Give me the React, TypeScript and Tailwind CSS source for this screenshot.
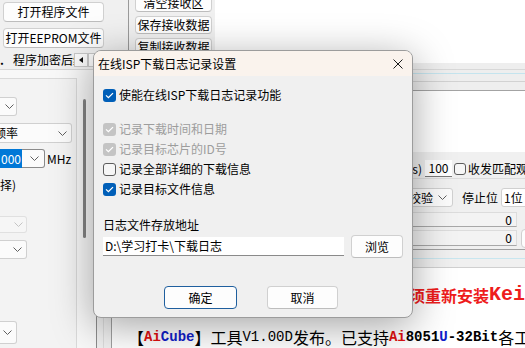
import React from "react";

const Chevron = ({ color = "#606060" }: { color?: string }) => (
    <svg width="9" height="5" viewBox="0 0 9 5" className="shrink-0">
        <path d="M0.5 0.5 L4.5 4.5 L8.5 0.5" fill="none" stroke={color} strokeWidth="1" />
    </svg>
);

const Check = ({ state }: { state: "on" | "off" | "dis" }) => {
    if (state === "off")
        return <span className="w-[13px] h-[13px] shrink-0 rounded-[3px] border border-[#5c5c5c] bg-[#f6f6f6]" />;
    return (
        <span
            className={
                state === "on"
                    ? "w-[13px] h-[13px] shrink-0 rounded-[3px] bg-[#005fb8] flex items-center justify-center"
                    : "w-[13px] h-[13px] shrink-0 rounded-[3px] bg-[#c4c4c4] flex items-center justify-center"
            }
        >
            <svg width="9" height="7" viewBox="0 0 9 7">
                <path d="M1 3.4 L3.4 5.7 L8 1.1" fill="none" stroke="white" strokeWidth="1.3" />
            </svg>
        </span>
    );
};

const Btn = ({ className, children }: { className: string; children?: React.ReactNode }) => (
    <div
        className={
            "flex items-center justify-center rounded-[4px] border border-[#d0d0d0] border-b-[#bdbdbd] bg-[#fdfdfd] text-[12px] leading-none text-black " +
            className
        }
    >
        {children}
    </div>
);

const Row = ({ state, children }: { state: "on" | "off" | "dis"; children: React.ReactNode }) => (
    <div className="h-[20px] flex items-center gap-[3px]">
        <Check state={state} />
        <span className={state === "dis" ? "text-[12px] text-[#9d9d9d]" : "text-[12px] text-black"}>{children}</span>
    </div>
);

export default function App() {
    return (
        <div className="relative w-[525px] h-[348px] overflow-hidden bg-[#f0f0f0] flex font-['Noto_Sans_CJK_SC','Noto_Sans',sans-serif] text-black">
            {/* left column */}
            <div className="w-[111px] shrink-0 flex flex-col">
                <div className="h-[50px] pt-[2px] pl-[3px] flex flex-col gap-[6px]">
                    <Btn className="w-[101px] h-[20px]">打开程序文件</Btn>
                    <Btn className="w-[101px] h-[20px]">打开EEPROM文件</Btn>
                </div>
                <div className="h-[19px] flex items-center">
                    <div className="w-[74px] overflow-hidden whitespace-nowrap flex items-center text-[12px] leading-none">
                        <span className="w-[13px] shrink-0 font-bold">.</span>
                        <span>程序加密后续</span>
                    </div>
                    <div className="w-[14px] h-[14px] border border-[#c8c8c8] bg-[#fbfbfb] flex items-center justify-center">
                        <svg width="4" height="6" viewBox="0 0 4 6">
                            <path d="M4 0 L0 3 L4 6 Z" fill="#111" />
                        </svg>
                    </div>
                    <div className="w-[14px] h-[14px] border border-[#c8c8c8] bg-[#fbfbfb]" />
                </div>
                <div className="flex-1 flex border-t border-[#d6d6d6]">
                    <div className="w-[97px] bg-[#f8f8f8] border-r border-[#8c8c8c] pt-[8px] flex">
                        <div className="w-[77px] border-t border-r border-[#dadada] bg-[#f3f3f3] flex flex-col text-[12px] leading-none">
                            <div className="mt-[18px] h-[19px] w-[17px] border border-l-0 border-[#d0d0d0] bg-[#fbfbfb] rounded-r-[3px] flex items-center justify-end pr-[2px]">
                                <Chevron />
                            </div>
                            <div className="mt-[7px] h-[20px] w-[72px] border border-l-0 border-[#d0d0d0] bg-[#fbfbfb] rounded-r-[3px] flex items-center pr-[4px]">
                                <span className="-ml-[6px] flex-1 whitespace-nowrap">频率</span>
                                <Chevron />
                            </div>
                            <div className="mt-[6px] flex items-center">
                                <div className="h-[19px] w-[45px] border border-l-0 border-[#8a8a8a] bg-[#fbfbfb] rounded-r-[3px] flex items-center pr-[5px]">
                                    <span className="flex-1">
                                        <span className="bg-[#0078d7] text-white px-[1px] py-[1px]">000</span>
                                    </span>
                                    <Chevron />
                                </div>
                                <span className="ml-[2px]">MHz</span>
                            </div>
                            <div className="mt-[10px] h-[14px] flex items-center">择)</div>
                            <div className="mt-[24px] h-[17px] w-[27px] border border-l-0 border-[#e0e0e0] bg-[#f6f6f6] rounded-r-[3px] flex items-center justify-end pr-[3px]">
                                <Chevron color="#c4c4c4" />
                            </div>
                            <div className="mt-[7px] h-[19px] w-[27px] border border-l-0 border-[#d0d0d0] bg-[#fbfbfb] rounded-r-[3px] flex items-center justify-end pr-[4px]">
                                <Chevron />
                            </div>
                            <div className="mt-[62px] h-[23px] w-[17px] border border-l-0 border-[#d0d0d0] bg-[#fbfbfb] rounded-r-[3px] flex items-center justify-end pr-[4px]">
                                <Chevron />
                            </div>
                        </div>
                        <div className="flex-1">
                            <div className="mt-[21px] ml-[6px] w-[3px] h-[139px] rounded-full bg-[#858585]" />
                        </div>
                    </div>
                    <div className="w-[14px]">
                        <div className="w-[7px] h-full border-r border-[#dcdcdc]" />
                    </div>
                </div>
            </div>

            {/* right column */}
            <div className="flex-1 flex flex-col">
                <div className="h-[63px] flex">
                    <div className="w-[17px]" />
                    <div className="w-[87px] border-l border-[#9a9a9a] pl-[6px] flex flex-col gap-[4px] -mt-[6px]">
                        <Btn className="w-[77px] h-[18px] shrink-0">清空接收区</Btn>
                        <Btn className="w-[77px] h-[18px] shrink-0">保存接收数据</Btn>
                        <Btn className="w-[77px] h-[18px] shrink-0">复制接收数据</Btn>
                    </div>
                    <div className="flex-1 bg-white" />
                </div>
                <div className="h-[28px] bg-[#eeeeee] flex flex-col border-b border-[#a3a3a3]">
                    <div className="mt-[6px] h-px bg-[#d8d8d8]" />
                    <div className="mt-[3px] h-px bg-[#c4e4ee]" />
                    <div className="mt-[7px] h-px bg-[#d2d2d2]" />
                </div>
                <div className="h-[61px] bg-white" />
                <div className="flex flex-col text-[12px] leading-none">
                    <div className="mt-[8px] h-[17px] flex items-center whitespace-nowrap">
                        <span className="w-[311px] text-right">(ms)</span>
                        <span className="ml-[3px] w-[27px] h-[17px] bg-white border-b border-[#7a7a7a] flex items-center justify-center">100</span>
                        <span className="ml-[2px] w-[12px] h-[12px] rounded-[3px] border border-[#5c5c5c] bg-[#f6f6f6]" />
                        <span className="ml-[2px]">收发匹配观察</span>
                    </div>
                    <div className="mt-[1px] h-px bg-[#dcdcdc]" />
                    <div className="mt-[9px] h-[19px] flex items-center whitespace-nowrap">
                        <div className="ml-[283px] w-[59px] h-[19px] border border-[#d0d0d0] bg-[#fbfbfb] rounded-[3px] flex items-center pl-[2px] pr-[5px]">
                            <span className="flex-1">无校验</span>
                            <Chevron />
                        </div>
                        <span className="ml-[9px]">停止位</span>
                        <div className="ml-[3px] w-[40px] h-[19px] border border-[#d0d0d0] bg-white rounded-[3px] flex items-center pl-[2px]">1位</div>
                    </div>
                    <div className="mt-[5px] h-[15px] flex">
                        <div className="ml-[199px] w-[207px] h-[15px] bg-[#f3f3f3] border border-[#dcdcdc] border-b-[#a8a8a8] flex items-center justify-end pr-[4px]">0</div>
                    </div>
                    <div className="mt-[3px] h-[16px] flex items-center">
                        <div className="ml-[199px] w-[207px] h-[16px] bg-[#f3f3f3] border border-[#dcdcdc] border-b-[#a8a8a8] flex items-center justify-end pr-[4px]">0</div>
                        <div className="ml-[4px] w-[30px] h-[19px] rounded-[4px] border border-[#d0d0d0] bg-[#fdfdfd]" />
                    </div>
                    <div className="mt-[3px] h-px bg-[#a0a0a0]" />
                    <div className="mt-[8px] h-px bg-[#c8e6ef]" />
                    <div className="mt-[8px] h-px bg-[#d0d0d0]" />
                </div>
                <div className="flex-1 bg-white border-l border-[#a0a0a0] pl-[16px] whitespace-nowrap overflow-hidden">
                    <div className="mt-[17px] h-[20px] flex items-center text-[16px] leading-none font-bold text-[#ee1c1c]">
                        <span className="w-[281px] shrink-0" />
                        <span>须重新安装</span>
                        <span className="font-['Liberation_Mono',monospace] text-[20px]">Keil</span>
                    </div>
                    <div className="mt-[22px] h-[20px] flex items-center text-[16px] leading-none">
                        <span>【</span>
                        <span className="font-['Liberation_Mono',monospace] text-[14px] font-bold text-[#e01010]">Ai</span>
                        <span className="font-['Liberation_Mono',monospace] text-[14px] font-bold text-[#1020c8]">Cube</span>
                        <span>】工具</span>
                        <span className="font-['Liberation_Mono',monospace] text-[14px]">V1.00D</span>
                        <span>发布。已支持</span>
                        <span className="font-['Liberation_Mono',monospace] text-[14px] font-bold text-[#e01010]">Ai</span>
                        <span className="font-['Liberation_Mono',monospace] text-[14px] font-bold">8051</span>
                        <span className="font-['Liberation_Mono',monospace] text-[14px] font-bold text-[#1020c8]">U</span>
                        <span className="font-['Liberation_Mono',monospace] text-[14px] font-bold">-32Bit</span>
                        <span>各工具</span>
                    </div>
                </div>
            </div>

            {/* dialog */}
            <div className="absolute left-[93px] top-[50px] w-[320px] h-[268px] rounded-[8px] border border-[#9c9c9c] bg-[#f0f0f0] shadow-[0_8px_40px_rgba(0,0,0,0.36)] overflow-hidden flex flex-col">
                <div className="h-[25px] shrink-0 bg-[#faf3ed] flex items-center pl-[4px] pr-[9px]">
                    <span className="flex-1 text-[12px] leading-none">在线ISP下载日志记录设置</span>
                    <svg width="10" height="10" viewBox="0 0 10 10">
                        <path d="M0.5 0.5 L9.5 9.5 M9.5 0.5 L0.5 9.5" stroke="#1a1a1a" strokeWidth="1" />
                    </svg>
                </div>
                <div className="flex-1 flex flex-col pl-[9px] text-[12px] leading-none">
                    <div className="mt-[9px]">
                        <Row state="on">使能在线ISP下载日志记录功能</Row>
                    </div>
                    <div className="mt-[14px]">
                        <Row state="dis">记录下载时间和日期</Row>
                        <Row state="dis">记录目标芯片的ID号</Row>
                        <Row state="off">记录全部详细的下载信息</Row>
                        <Row state="on">记录目标文件信息</Row>
                    </div>
                    <div className="mt-[19px] h-[14px] flex items-center">日志文件存放地址</div>
                    <div className="mt-[3px] h-[23px] flex items-center">
                        <div className="w-[241px] h-[19px] bg-white border-b border-[#8a8a8a] flex items-center pl-[2px]">
                            D:\学习打卡\下载日志
                        </div>
                        <Btn className="ml-[7px] w-[52px] h-[23px]">浏览</Btn>
                    </div>
                    <div className="mt-[28px] flex">
                        <Btn className="ml-[61px] w-[73px] h-[23px] !border-[#1f5f9e]">确定</Btn>
                        <Btn className="ml-[30px] w-[71px] h-[23px]">取消</Btn>
                    </div>
                </div>
            </div>
        </div>
    );
}
